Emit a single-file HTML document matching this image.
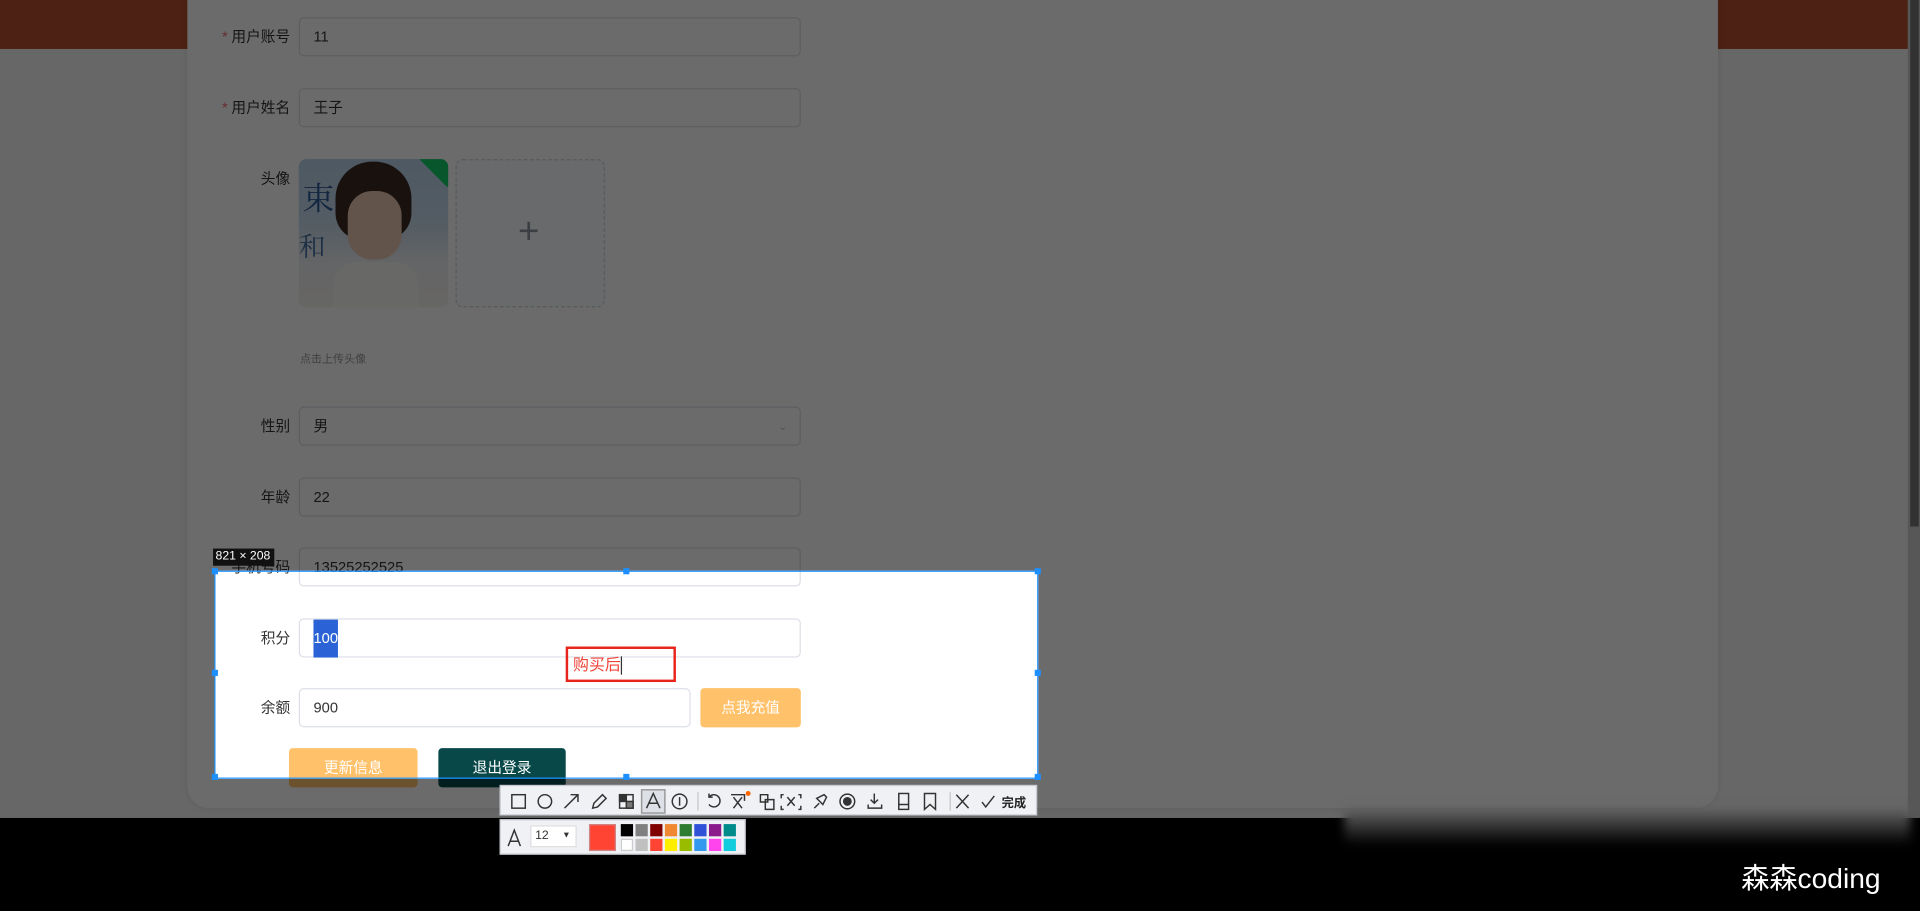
<!DOCTYPE html>
<html><head><meta charset="utf-8"><style>
*{margin:0;padding:0;box-sizing:border-box}
html,body{width:1920px;height:911px;overflow:hidden;background:#000}
#w{position:absolute;left:0;top:0;width:1568px;height:744px;transform:scale(1.22449);transform-origin:0 0;background:#f6f6f6;font-family:"Liberation Sans","Noto Sans CJK SC",sans-serif;font-size:12px;color:#333;overflow:hidden}
.a{position:absolute}
.top{left:0;top:0;width:1568px;height:40px;background:#b84f2e}
.card{left:153px;top:-20px;width:1250px;height:680px;background:#fff;border-radius:18px;box-shadow:0 0 6px rgba(0,0,0,.1)}
.lb{width:80px;text-align:right;left:157px;font-size:12px;color:#333;line-height:32px}
.lb i{color:#f56c6c;font-style:normal;margin-right:3px}
.in{left:244px;width:410px;height:32px;border:1px solid #dcdfe6;border-radius:4px;background:#fff;line-height:30px;padding-left:11px;font-size:12px;color:#333}
.btn{height:32px;border-radius:3px;color:#fff;text-align:center;line-height:32px;font-size:12px}
.h{width:5px;height:5px;background:#1e8fff}
.tb{background:#f0f1f5;border:1px solid #c8cbd2}
.tb svg{position:absolute}
.sw{position:absolute;width:10px;height:10px}
</style></head><body><div id="w">
<div class="a top"></div>
<div class="a card"></div>
<div class="a lb" style="top:14px"><i>*</i>用户账号</div><div class="a in" style="top:14px">11</div>
<div class="a lb" style="top:72px"><i>*</i>用户姓名</div><div class="a in" style="top:72px">王子</div>
<div class="a lb" style="top:130px">头像</div>
<div class="a" style="left:244px;top:130px;width:122px;height:121px;border-radius:6px;overflow:hidden;background:linear-gradient(180deg,#b9d4ec 0%,#c9dcee 45%,#eef0f2 70%,#f4f2ee 100%)">
 <div class="a" style="left:30px;top:2px;width:62px;height:64px;border-radius:30px 30px 22px 22px;background:#3a2a22"></div>
 <div class="a" style="left:40px;top:26px;width:44px;height:56px;border-radius:20px;background:#e9c8b4"></div>
 <div class="a" style="left:28px;top:84px;width:70px;height:50px;border-radius:20px 20px 0 0;background:#f7f7f5"></div>
 <div class="a" style="left:3px;top:12px;font-size:26px;color:#2e5c9a;font-family:'Noto Serif CJK SC',serif">束</div>
 <div class="a" style="left:0px;top:55px;font-size:22px;color:#4a74a8;font-family:'Noto Serif CJK SC',serif">和</div>
 <div class="a" style="left:100px;top:-8px;width:34px;height:22px;background:#13ce66;transform:rotate(45deg)"></div>
</div>
<div class="a" style="left:372px;top:130px;width:122px;height:121px;border:1px dashed #d0d3d9;border-radius:6px;background:#fbfdff"><div class="a" style="left:50px;top:42px;font-size:30px;color:#8c939d;font-weight:300">+</div></div>
<div class="a" style="left:245px;top:286px;font-size:9px;color:#999">点击上传头像</div>
<div class="a lb" style="top:332px">性别</div><div class="a in" style="top:332px">男<span class="a" style="right:10px;top:0;color:#c0c4cc;font-size:9px">⌄</span></div>
<div class="a lb" style="top:390px">年龄</div><div class="a in" style="top:390px">22</div>
<div class="a lb" style="top:447px">手机号码</div><div class="a in" style="top:447px">13525252525</div>
<div class="a lb" style="top:505px">积分</div><div class="a in" style="top:505px"><span style="background:#2b63d6;color:#fff;display:inline-block;height:31px;margin-top:-1px;width:20px">100</span></div>
<div class="a lb" style="top:562px">余额</div><div class="a in" style="top:562px;width:320px">900</div>
<div class="a btn" style="left:572px;top:562px;width:82px;background:#ffc169">点我充值</div>
<div class="a btn" style="left:236px;top:611px;width:105px;background:#ffc169">更新信息</div>
<div class="a btn" style="left:358px;top:611px;width:104px;background:#084848">退出登录</div>
<div class="a" style="left:1558px;top:0;width:10px;height:744px;background:#cfcfcf"></div>
<div class="a" style="left:1560px;top:0;width:7px;height:430px;background:#777"></div>
<!-- dim via box-shadow -->
<div class="a" style="left:175px;top:466px;width:673px;height:170px;box-shadow:0 0 0 3000px rgba(0,0,0,.58);border:1px solid #1e90ff"></div>
<div class="a h" style="left:173px;top:464px"></div><div class="a h" style="left:509px;top:464px"></div><div class="a h" style="left:845px;top:464px"></div>
<div class="a h" style="left:173px;top:547px"></div><div class="a h" style="left:845px;top:547px"></div>
<div class="a h" style="left:173px;top:632px"></div><div class="a h" style="left:509px;top:632px"></div><div class="a h" style="left:845px;top:632px"></div>
<div class="a" style="left:174px;top:448px;width:50px;height:14px;background:#111;color:#fff;font-size:10px;line-height:14px;padding-left:2px">821 × 208</div>
<div class="a" style="left:462px;top:528px;width:90px;height:29px;border:2px solid #e8231a;color:#f0443a;font-size:13px;line-height:26px;padding-left:4px">购买后<span style="display:inline-block;width:1px;height:15px;background:#333;vertical-align:middle"></span></div>
<!-- bottom -->
<div class="a" style="left:0;top:668px;width:1568px;height:76px;background:#000"></div>
<div class="a" style="left:1098px;top:660px;width:462px;height:30px;background:linear-gradient(#666,#000);filter:blur(4px)"></div>
<div class="a" style="left:1422px;top:702px;color:#fff;font-size:23px;line-height:30px">森森coding</div>
<!-- toolbar -->
<div class="a tb" style="left:408px;top:641px;width:439px;height:25px">
<svg width="439" height="25" fill="none" stroke="#333" stroke-width="1.2">
<rect x="9" y="7" width="11" height="11"/><circle cx="36" cy="12.5" r="5.5"/><path d="M52 18L63 7M57 7h6v6"/><path d="M75 18l1-4 7-7 3 3-7 7z"/>
<rect x="97" y="7" width="11" height="11"/><rect x="97" y="7" width="5.5" height="5.5" fill="#333"/><rect x="102.5" y="12.5" width="5.5" height="5.5" fill="#777"/>
<rect x="115" y="3" width="19" height="19" fill="#dde0e6" stroke="#999"/><path d="M119 18l5.5-12 5.5 12M121 14h7"/>
<circle cx="146" cy="12.5" r="6"/><path d="M146 9v7"/><path d="M161 5v15" stroke="#ccc"/>
<path d="M170 9a5 5 0 1 1 0 6M170 6v3h3"/><path d="M188 7h11v5M190 18l7-9M197 18l-7-9"/><circle cx="202" cy="6" r="2" fill="#f60" stroke="none"/>
<path d="M212 7h6v6h-6zM216 11h7v8h-7z"/><path d="M231 7h-2v3M243 7h2v3M231 19h-2v-3M243 19h2v-3M234 9l6 7M240 9l-6 7"/>
<path d="M256 18l4-4M258 10l5 5 3-6-2-2z"/><circle cx="283" cy="12.5" r="6"/><circle cx="283" cy="12.5" r="3" fill="#333"/>
<path d="M305 6v8M302 11l3 3 3-3M300 15v3h11v-3"/><rect x="325" y="6" width="8" height="13"/><path d="M325 15h8"/><path d="M346 6h9v13l-4.5-4-4.5 4z"/>
<path d="M367 5v15" stroke="#ccc"/><path d="M372 7l10 11M382 7l-10 11"/><path d="M393 13l3 4 7-9"/></svg>
<span class="a" style="left:409px;top:5px;font-size:10px;font-weight:bold;color:#222">完成</span>
</div>
<div class="a tb" style="left:408px;top:669px;width:201px;height:29px">
<svg width="40" height="29" fill="none" stroke="#333" stroke-width="1.2" style="left:0;top:0"><path d="M6 21l5-13 5 13M8 17h6"/></svg>
<div class="a" style="left:24px;top:4px;width:38px;height:18px;background:#fff;border:1px solid #ddd;font-size:10px;line-height:16px;padding-left:3px">12<span class="a" style="right:4px;top:0;font-size:7px">▼</span></div>
<div class="a" style="left:72px;top:3px;width:22px;height:22px;background:#ff4433;border:1px solid #c88"></div>
<div class="sw" style="left:98px;top:3px;background:#000"></div><div class="sw" style="left:110px;top:3px;background:#808080"></div><div class="sw" style="left:122px;top:3px;background:#800000"></div><div class="sw" style="left:134px;top:3px;background:#f08832"></div><div class="sw" style="left:146px;top:3px;background:#2e7d32"></div><div class="sw" style="left:158px;top:3px;background:#3050d8"></div><div class="sw" style="left:170px;top:3px;background:#8b1a8b"></div><div class="sw" style="left:182px;top:3px;background:#008b8b"></div>
<div class="sw" style="left:98px;top:15px;background:#fff;border:1px solid #ccc"></div><div class="sw" style="left:110px;top:15px;background:#c0c0c0"></div><div class="sw" style="left:122px;top:15px;background:#ff4433"></div><div class="sw" style="left:134px;top:15px;background:#ffee00"></div><div class="sw" style="left:146px;top:15px;background:#99bb00"></div><div class="sw" style="left:158px;top:15px;background:#3399ee"></div><div class="sw" style="left:170px;top:15px;background:#ff44ee"></div><div class="sw" style="left:182px;top:15px;background:#11ccdd"></div>
</div>
</div></body></html>
